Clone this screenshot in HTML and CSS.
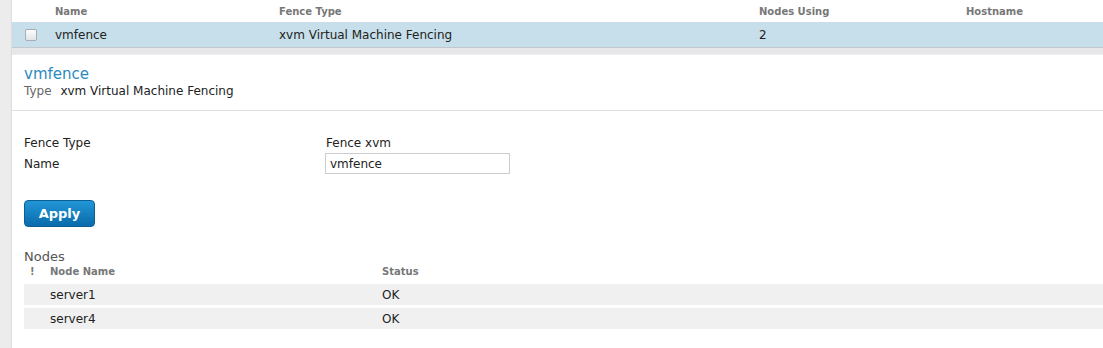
FILE: index.html
```html
<!DOCTYPE html>
<html lang="en">
<head>
    <meta charset="UTF-8">
    <title>Fence Devices</title>
    <link rel="stylesheet" href="styles.css">
</head>
<body>
    <div class="page">
        <div class="sidebar"></div>
        <div class="main">
            <!-- Fence device list -->
            <div class="list">
                <div class="list-head">
                    <span></span>
                    <span>Name</span>
                    <span>Fence Type</span>
                    <span>Nodes Using</span>
                    <span>Hostname</span>
                </div>
                <div class="list-row selected">
                    <span><span class="check"></span></span>
                    <span>vmfence</span>
                    <span>xvm Virtual Machine Fencing</span>
                    <span>2</span>
                    <span></span>
                </div>
            </div>

            <div class="spacer"></div>

            <!-- Device details -->
            <div class="panel">
                <div class="panel-head">
                    <div class="title">vmfence</div>
                    <div class="subtitle"><span class="muted">Type</span> xvm Virtual Machine Fencing</div>
                </div>

                <div class="panel-body">
                    <div class="form-row">
                        <label>Fence Type</label>
                        <span class="value">Fence xvm</span>
                    </div>
                    <div class="form-row">
                        <label for="name">Name</label>
                        <input type="text" id="name" value="vmfence">
                    </div>

                    <button type="button" class="apply">Apply</button>

                    <div class="section-label">Nodes</div>
                    <div class="nodes-head">
                        <span>!</span>
                        <span>Node Name</span>
                        <span>Status</span>
                    </div>
                    <div class="node-row">
                        <span></span>
                        <span>server1</span>
                        <span>OK</span>
                    </div>
                    <div class="node-row">
                        <span></span>
                        <span>server4</span>
                        <span>OK</span>
                    </div>
                </div>
            </div>
        </div>
    </div>
</body>
</html>
```

FILE: styles.css
```css
body {
    margin: 0;
    font-family: "DejaVu Sans", Verdana, sans-serif;
    font-size: 12px;
    color: #222;
    background-color: #fff;
}
.page {
    display: flex;
    min-height: 348px;
}
.sidebar {
    width: 11px;
    flex: none;
    background-color: #ececec;
    border-right: 1px solid #dcdcdc;
}
.main {
    flex: 1;
    display: flex;
    flex-direction: column;
}
.list-head, .list-row {
    display: grid;
    grid-template-columns: 43px 224px 480px 207px 1fr;
    align-items: center;
}
.list-head {
    height: 22px;
    font-size: 10px;
    font-weight: bold;
    color: #777;
}
.list-row {
    height: 25px;
}
.list-row.selected {
    background-color: #c7dfea;
    border-bottom: 1px solid #c4c8cc;
}
.check {
    display: block;
    width: 10px;
    height: 10px;
    margin-left: 13px;
    border: 1px solid #a9adb1;
    border-radius: 2px;
    background: linear-gradient(#fdfdfd, #e2e4e6);
}
.spacer {
    height: 6px;
    background-color: #e7e7ea;
    border-bottom: 1px solid #ececee;
}
.panel {
    flex: 1;
}
.panel-head {
    padding: 10px 12px 11px;
    border-bottom: 1px solid #dedede;
}
.title {
    font-size: 15px;
    line-height: 18px;
    color: #2b8bc1;
}
.subtitle {
    line-height: 16px;
}
.muted {
    color: #666;
    margin-right: 5px;
}
.panel-body {
    padding: 22px 0 0 12px;
}
.form-row {
    display: flex;
    align-items: center;
    min-height: 20px;
}
.form-row label {
    width: 301px;
}
.form-row .value {
    padding-left: 1px;
}
.form-row input {
    width: 185px;
    height: 21px;
    box-sizing: border-box;
    padding: 0 4px;
    border: 1px solid #ccc;
    font-family: inherit;
    font-size: 12px;
    color: #222;
}
.apply {
    display: block;
    margin-top: 26px;
    width: 71px;
    height: 27px;
    border: 1px solid #0d5f93;
    border-radius: 4px;
    background: linear-gradient(#2196d6, #0a6bab);
    color: #fff;
    font-family: inherit;
    font-size: 13px;
    font-weight: bold;
    cursor: pointer;
}
.section-label {
    margin-top: 22px;
    font-size: 13px;
    line-height: 16px;
    color: #555;
}
.nodes-head, .node-row {
    display: grid;
    grid-template-columns: 20px 332px 1fr;
    align-items: center;
    padding-left: 6px;
}
.nodes-head {
    height: 13px;
    margin-bottom: 6px;
    font-size: 10px;
    font-weight: bold;
    color: #777;
}
.node-row {
    height: 21px;
    margin-bottom: 3px;
    background-color: #f0f0f0;
}
```
